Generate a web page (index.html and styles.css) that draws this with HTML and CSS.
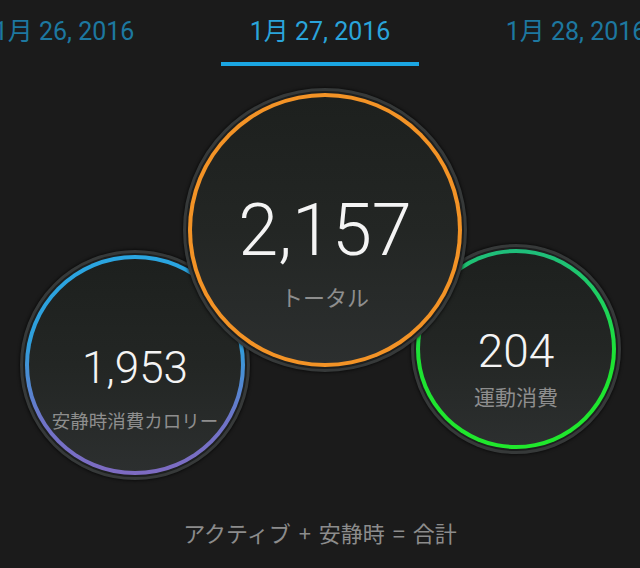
FILE: index.html
```html
<!DOCTYPE html>
<html lang="ja">
<head>
<meta charset="utf-8">
<title>カロリー</title>
<link rel="stylesheet" href="styles.css">
</head>
<body>
<div class="page">
  <nav class="tabs">
    <div class="tab"><span class="tab-label">1月 26, 2016</span><span class="indicator"></span></div>
    <div class="tab active"><span class="tab-label">1月 27, 2016</span><span class="indicator"></span></div>
    <div class="tab"><span class="tab-label">1月 28, 2016</span><span class="indicator"></span></div>
  </nav>
  <section class="stage">
    <div class="circle circle-rest">
      <div class="ring ring-blue">
        <div class="face face-rest">
          <div class="value value-rest">1,953</div>
          <div class="label label-rest">安静時消費カロリー</div>
        </div>
      </div>
    </div>
    <div class="circle circle-total">
      <div class="ring ring-orange">
        <div class="face face-total">
          <div class="value value-total">2,157</div>
          <div class="label label-total">トータル</div>
        </div>
      </div>
    </div>
    <div class="circle circle-active">
      <div class="ring ring-green">
        <div class="face face-active">
          <div class="value value-active">204</div>
          <div class="label label-active">運動消費</div>
        </div>
      </div>
    </div>
  </section>
  <p class="caption">アクティブ + 安静時 = 合計</p>
</div>
</body>
</html>
```
FILE: styles.css
```css
* { box-sizing: border-box; }
html, body {
  margin: 0;
  padding: 0;
  background: #1b1b1b;
}
body {
  width: 640px;
  height: 568px;
  overflow: hidden;
  font-family: Roboto, "Noto Sans CJK JP", sans-serif;
}
.page {
  width: 640px;
  height: 568px;
  overflow: hidden;
}
.tabs {
  display: flex;
  width: 768px;
  margin-left: -64px;
  height: 67px;
}
.tab {
  flex: 0 0 256px;
  display: flex;
  flex-direction: column;
  align-items: center;
  padding-top: 17px;
}
.tab-label {
  display: block;
  font-size: 25px;
  line-height: 29px;
  color: #1d78a0;
  white-space: nowrap;
}
.tab.active .tab-label { color: #2aa4da; }
.indicator {
  display: block;
  width: 198px;
  height: 4px;
  margin-top: 16px;
  background: transparent;
}
.tab.active .indicator { background: #1ba6e2; }

.stage {
  display: flex;
  align-items: flex-start;
  height: 413px;
}
.circle {
  flex: 0 0 auto;
  border-radius: 50%;
  border: 3px solid #363939;
  padding: 2px;
  background: #1d1f1f;
  box-shadow: 0 0 3px 1px rgba(0,0,0,0.55);
  position: relative;
}
.circle-rest {
  width: 230px;
  height: 230px;
  margin-left: 20px;
  margin-top: 183px;
  z-index: 1;
}
.circle-total {
  width: 284px;
  height: 284px;
  margin-left: -67px;
  margin-top: 21px;
  z-index: 2;
}
.circle-active {
  width: 210px;
  height: 210px;
  margin-left: -56px;
  margin-top: 177px;
  z-index: 1;
}
.ring {
  width: 100%;
  height: 100%;
  border-radius: 50%;
  padding: 4px;
}
.ring-orange { background: #f39326; }
.ring-blue { background: linear-gradient(180deg, #2aa6e1 0%, #2f9fdc 40%, #6f74c8 75%, #7e6bc2 100%); }
.ring-green { background: linear-gradient(180deg, #1fbd7c 0%, #1ed35a 30%, #1de332 55%, #20e82c 100%); }
.face {
  width: 100%;
  height: 100%;
  border-radius: 50%;
  background: linear-gradient(180deg, #1d201e 0%, #232624 50%, #2c2f2f 100%);
  display: flex;
  flex-direction: column;
  align-items: center;
}
.value {
  color: #f4f4f4;
  font-family: Roboto, sans-serif;
  font-weight: 300;
  white-space: nowrap;
}
.label {
  color: #8e8e8e;
  font-family: "Noto Sans CJK JP", sans-serif;
  white-space: nowrap;
}
.face-total { padding-top: 98px; }
.value-total { font-size: 72px; line-height: 72px; }
.label-total { font-size: 22px; line-height: 22px; margin-top: 18px; }

.face-rest { padding-top: 87px; }
.value-rest { font-size: 44px; line-height: 44px; }
.label-rest { font-size: 18.5px; line-height: 18px; margin-top: 21px; }

.face-active { padding-top: 75px; }
.value-active { font-size: 46px; line-height: 46px; }
.label-active { font-size: 21px; line-height: 21px; margin-top: 12px; }

.caption {
  margin: 41px 0 0;
  text-align: center;
  font-family: "Noto Sans CJK JP", sans-serif;
  font-size: 22px;
  line-height: 22px;
  word-spacing: 3px;
  color: #8c8c8c;
}
```
